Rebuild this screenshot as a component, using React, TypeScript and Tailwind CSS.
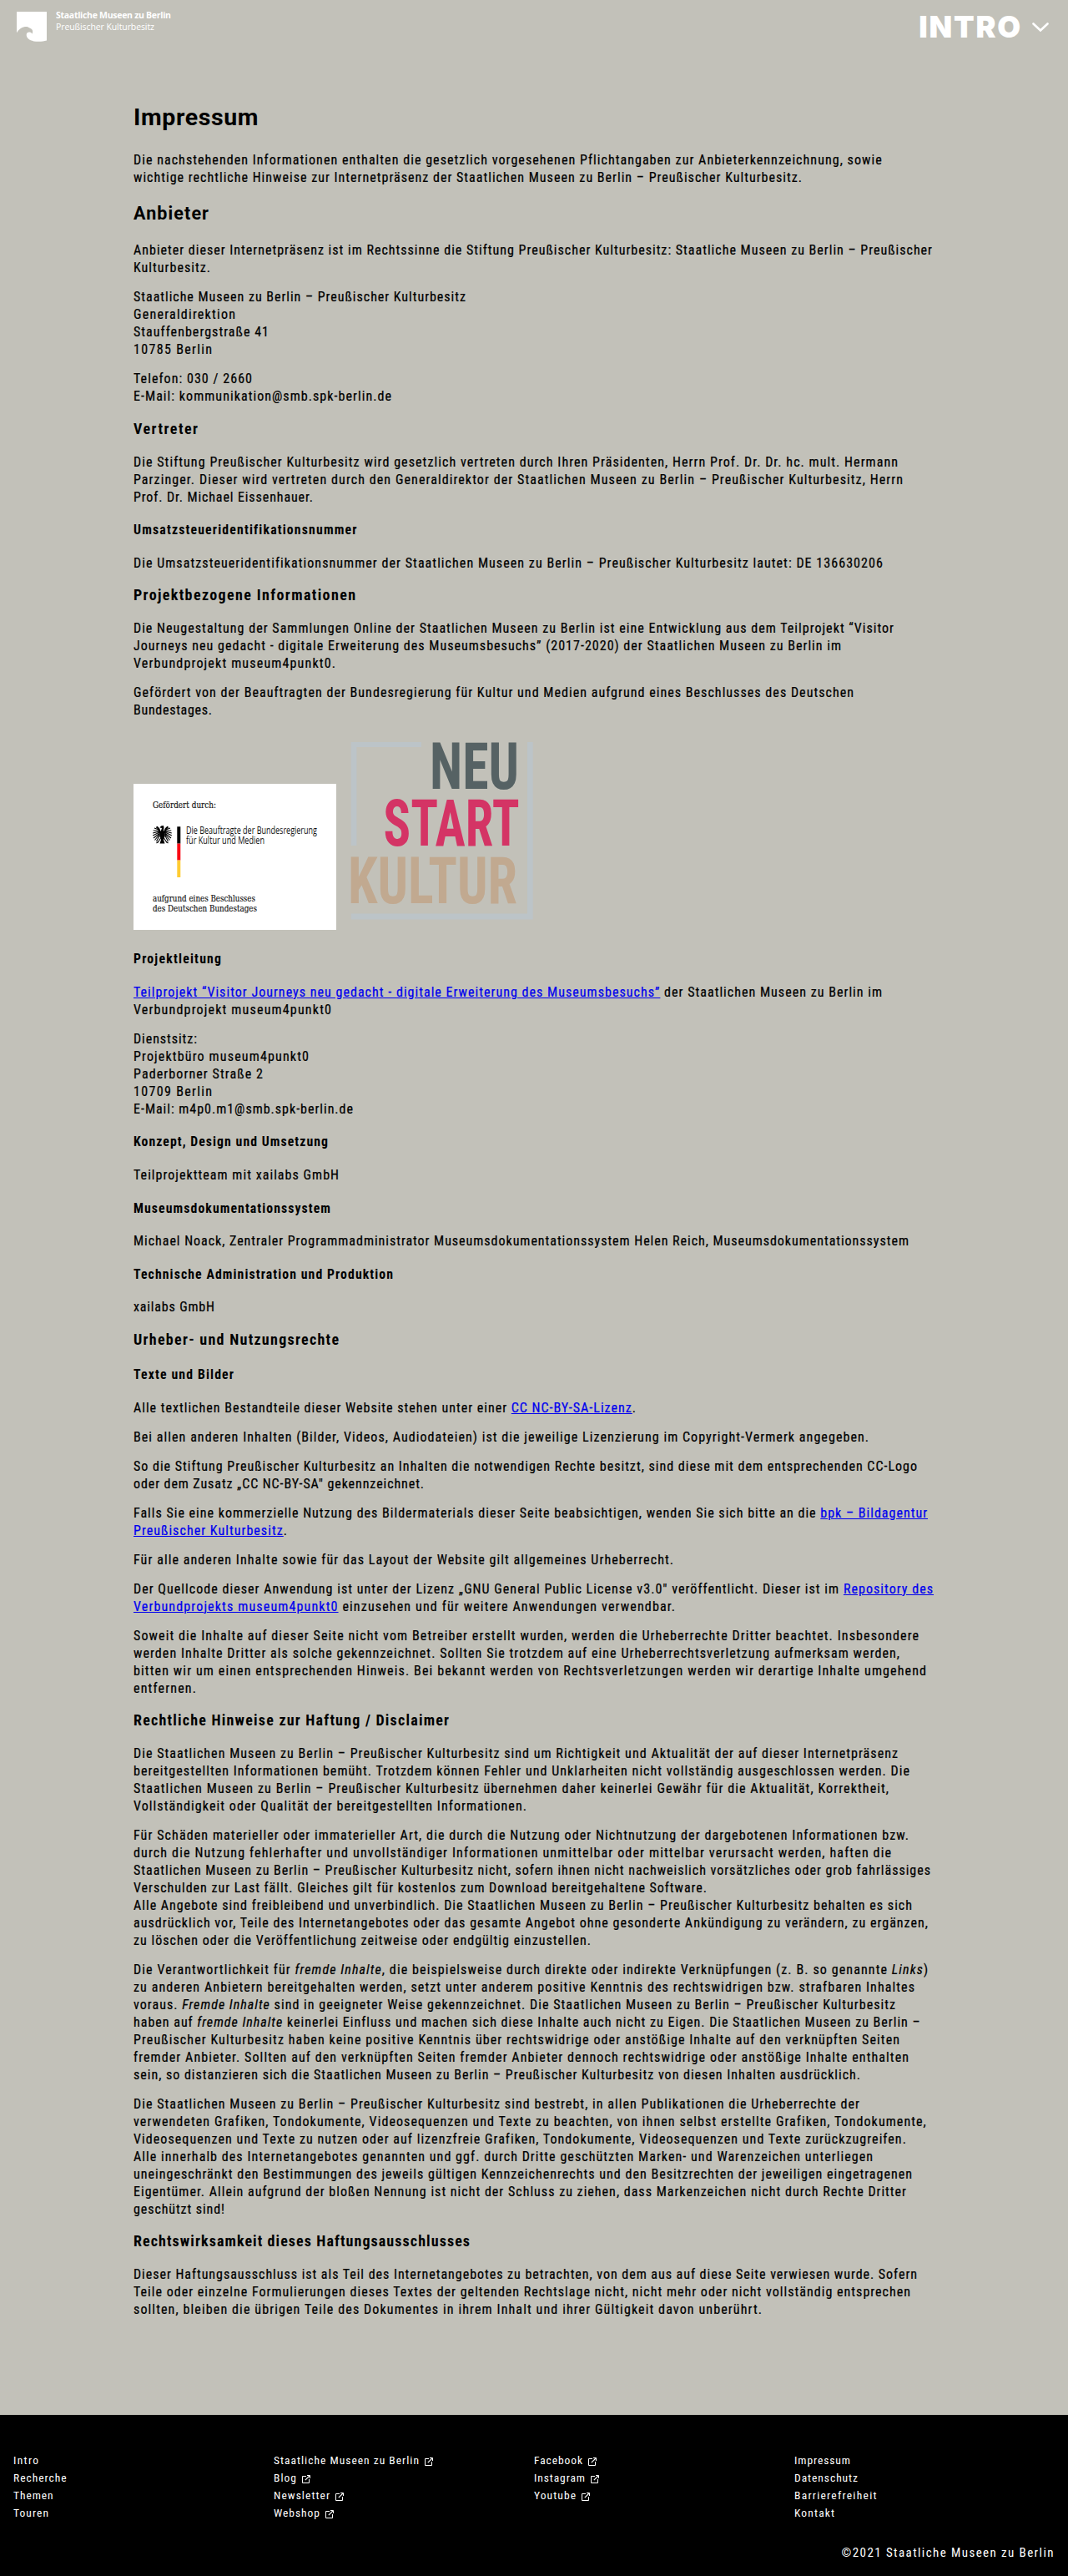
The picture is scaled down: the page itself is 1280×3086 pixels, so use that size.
import { useLayoutEffect, useRef, useState, type ReactNode } from "react";

/* One line of text, tracked so that it spans the given width. */
function Line({ w, children, className = "" }: { w: number; children: ReactNode; className?: string }) {
  const ref = useRef<HTMLSpanElement>(null);
  const [tracking, setTracking] = useState<number | null>(null);
  useLayoutEffect(() => {
    const el = ref.current;
    if (!el || tracking !== null) return;
    const gaps = Math.max(1, (el.textContent ?? "").length - 1);
    setTracking((w - el.getBoundingClientRect().width) / gaps);
  }, [tracking, w]);
  return (
    <span
      ref={ref}
      className={`block w-max whitespace-nowrap ${className}`}
      style={{ letterSpacing: tracking === null ? undefined : `${tracking}px` }}
    >
      {children}
    </span>
  );
}

type Row = [ReactNode, number];

function P({ rows }: { rows: Row[] }) {
  return (
    <p className="my-[14px] text-[16px] [-webkit-text-stroke:0.22px]">
      {rows.map(([t, w], i) => (
        <Line key={i} w={w}>{t}</Line>
      ))}
    </p>
  );
}

function H3({ w, children }: { w: number; children: ReactNode }) {
  return (
    <h3 className="my-[16.38px] text-[18px] leading-[24.57px] font-bold">
      <Line w={w}>{children}</Line>
    </h3>
  );
}

function H4({ w, children }: { w: number; children: ReactNode }) {
  return (
    <h4 className="my-[18.62px] font-bold">
      <Line w={w}>{children}</Line>
    </h4>
  );
}

function A({ children }: { children: ReactNode }) {
  return <a href="#" className="text-[#0000ee] underline">{children}</a>;
}

function Logo() {
  return (
    <svg width="36" height="36" viewBox="0 0 36 36" className="shrink-0">
      <path
        fill="#fff"
        d="M0 0H36V34.6C31.500 36 25 36.200 20.500 35.400C15 34.400 11.600 31.300 11.700 27.700C11.800 24.700 14 24.200 16 24.600C17.600 25 18.300 25.900 18.500 26.700C19.600 24.600 19.500 22 17.400 20.500L15 19.300C13.500 18 11.200 17.600 9 18.200C5.500 18.600 2.500 21.300 0 25.300Z"
      />
    </svg>
  );
}

function External() {
  return (
    <svg width="10" height="10" viewBox="0 0 10 10" fill="none" stroke="#fff" className="mt-[2px] ml-[6px]">
      <path d="M5 1.500H.5V9.500H8.500V5" />
      <path d="M3.800 6.200L9 1" strokeWidth="1.200" />
      <path d="M6 .5H9.500V4" />
    </svg>
  );
}

function FundingLogo() {
  return (
    <svg width="243" height="175" viewBox="0 0 243 175" className="shrink-0 bg-white">
      <g className="font-[DejaVu_Serif,Liberation_Serif,serif] [font-stretch:condensed]" fontSize="10.300" fill="#111" stroke="#111" strokeWidth=".15">
        <text x="23" y="29" textLength="76" lengthAdjust="spacingAndGlyphs">Gefördert durch:</text>
        <text x="23" y="141" textLength="123" lengthAdjust="spacingAndGlyphs">aufgrund eines Beschlusses</text>
        <text x="23" y="153" textLength="125" lengthAdjust="spacingAndGlyphs">des Deutschen Bundestages</text>
      </g>
      <g className="font-['Open_Sans',sans-serif] [font-stretch:normal]" fontSize="12" fill="#111">
        <text x="63" y="60" textLength="157" lengthAdjust="spacingAndGlyphs">Die Beauftragte der Bundesregierung</text>
        <text x="63" y="72" textLength="94" lengthAdjust="spacingAndGlyphs">für Kultur und Medien</text>
      </g>
      <rect x="52.300" y="51.300" width="4" height="20.300" fill="#000" />
      <rect x="52.300" y="71.600" width="4" height="20" fill="#fa0a14" />
      <rect x="52.300" y="91.600" width="4" height="20.400" fill="#ffcc33" />
      <g transform="translate(34.500 61)" stroke="#000" fill="none">
        <path fill="#000" stroke="none" d="M-1.500 -10.500L1.500 -11L2 -8.500L1.500 -5C3 -4 3.500 -1 3 2L1.500 6L3 10.500H-3L-1.500 6L-3 2C-3.500 -1 -3 -4 -1.500 -5L-.5 -8L-3 -8.500Z" />
        {[-1, 1].map((s) => (
          <g key={s} transform={`scale(${s} 1)`}>
            <path strokeWidth="2" d="M2.500 -2C3.500 -6 4 -8 7 -9.500" />
            <path strokeWidth="1.100" d="M4 -6L9.500 -8M3.500 -5L10.800 -5M3.500 -4L11.300 -2M3.500 -3L11.300 1M3 -2L10.500 4M3 -1L9 6.500M3 .5L7 8M2 4L5.500 9.500M5 8.500L7 10" />
          </g>
        ))}
      </g>
    </svg>
  );
}

function NeustartLogo() {
  return (
    <svg width="239" height="239" viewBox="0 0 239 239" className="ml-[4px] shrink-0 overflow-visible">
      <g fill="#bcc4c8">
        <path d="M13.700 14H98V20H20.400V138H13.700Z" />
        <path d="M225 14H231.700V226.500H13.700V219.500H225Z" />
      </g>
      <g className="font-[Roboto] [font-stretch:condensed]" fontSize="78.500" fontWeight="700">
        <text x="108" y="70" textLength="107" lengthAdjust="spacingAndGlyphs" fill="#566264">NEU</text>
        <text x="52.500" y="138.300" textLength="163" lengthAdjust="spacingAndGlyphs" fill="#d43465">START</text>
        <text x="10" y="207" textLength="203" lengthAdjust="spacingAndGlyphs" fill="#c1a990">KULTUR</text>
      </g>
    </svg>
  );
}

const footer: { t: string; w: number; ext?: boolean }[][] = [
  [{ t: "Intro", w: 30 }, { t: "Recherche", w: 63.5 }, { t: "Themen", w: 47.5 }, { t: "Touren", w: 42 }],
  [
    { t: "Staatliche Museen zu Berlin", w: 174, ext: true },
    { t: "Blog", w: 27, ext: true },
    { t: "Newsletter", w: 67, ext: true },
    { t: "Webshop", w: 55, ext: true },
  ],
  [
    { t: "Facebook", w: 58, ext: true },
    { t: "Instagram", w: 61, ext: true },
    { t: "Youtube", w: 50, ext: true },
  ],
  [{ t: "Impressum", w: 67 }, { t: "Datenschutz", w: 76 }, { t: "Barrierefreiheit", w: 98.5 }, { t: "Kontakt", w: 48 }],
];

export default function App() {
  return (
    <div className="flex min-h-[3086px] flex-col bg-[#c2c1b9] font-[Roboto,sans-serif] text-[15.75px] leading-[21px] text-black [font-stretch:condensed]">
      <header className="flex h-[60px] items-start justify-between pt-[14px] pr-[23px] pl-5 text-white">
        <div className="flex gap-[11px]">
          <Logo />
          <div className="-mt-[3.500px] font-['Open_Sans',sans-serif] text-[10.5px] leading-[14px] [font-stretch:normal]">
            <Line w={138} className="font-bold">Staatliche Museen zu Berlin</Line>
            <Line w={118}>Preußischer Kulturbesitz</Line>
          </div>
        </div>
        <div className="flex items-center gap-[12px]">
          <div className="font-[Inter,sans-serif] text-[36px] leading-9 font-black [font-stretch:normal]">
            <Line w={122}>INTRO</Line>
          </div>
          <svg width="20" height="12" viewBox="0 0 20 12" fill="none" stroke="#fff" strokeWidth="2.600" className="mt-[2px]">
            <path d="M1.500 1.500L10 9.500L18.500 1.500" strokeLinecap="round" />
          </svg>
        </div>
      </header>

      <main className="ml-40 flow-root w-[960px] pt-[60.2px]">
        <h1 className="mb-[18.76px] text-[28.5px] leading-[42px] font-bold [font-stretch:normal]"><Line w={149.5}>Impressum</Line></h1>
        <P rows={[
          ["Die nachstehenden Informationen enthalten die gesetzlich vorgesehenen Pflichtangaben zur Anbieterkennzeichnung, sowie", 896],
          ["wichtige rechtliche Hinweise zur Internetpräsenz der Staatlichen Museen zu Berlin – Preußischer Kulturbesitz.", 801],
        ]} />
        <h2 className="my-[17.43px] text-[21.5px] leading-[31.5px] font-bold [font-stretch:normal]"><Line w={90}>Anbieter</Line></h2>
        <P rows={[
          ["Anbieter dieser Internetpräsenz ist im Rechtssinne die Stiftung Preußischer Kulturbesitz: Staatliche Museen zu Berlin – Preußischer", 957],
          ["Kulturbesitz.", 92],
        ]} />
        <P rows={[
          ["Staatliche Museen zu Berlin – Preußischer Kulturbesitz", 398],
          ["Generaldirektion", 122],
          ["Stauffenbergstraße 41", 162],
          ["10785 Berlin", 94],
        ]} />
        <P rows={[["Telefon: 030 / 2660", 142], ["E-Mail: kommunikation@smb.spk-berlin.de", 309]]} />
        <H3 w={77}>Vertreter</H3>
        <P rows={[
          ["Die Stiftung Preußischer Kulturbesitz wird gesetzlich vertreten durch Ihren Präsidenten, Herrn Prof. Dr. Dr. hc. mult. Hermann", 916],
          ["Parzinger. Dieser wird vertreten durch den Generaldirektor der Staatlichen Museen zu Berlin – Preußischer Kulturbesitz, Herrn", 922],
          ["Prof. Dr. Michael Eissenhauer.", 215],
        ]} />
        <H4 w={267}>Umsatzsteueridentifikationsnummer</H4>
        <P rows={[["Die Umsatzsteueridentifikationsnummer der Staatlichen Museen zu Berlin – Preußischer Kulturbesitz lautet: DE 136630206", 897]]} />
        <H3 w={266}>Projektbezogene Informationen</H3>
        <P rows={[
          ["Die Neugestaltung der Sammlungen Online der Staatlichen Museen zu Berlin ist eine Entwicklung aus dem Teilprojekt “Visitor", 911],
          ["Journeys neu gedacht - digitale Erweiterung des Museumsbesuchs” (2017-2020) der Staatlichen Museen zu Berlin im", 848],
          ["Verbundprojekt museum4punkt0.", 242],
        ]} />
        <P rows={[
          ["Gefördert von der Beauftragten der Bundesregierung für Kultur und Medien aufgrund eines Beschlusses des Deutschen", 863],
          ["Bundestages.", 94],
        ]} />
        <div className="flex h-[244.400px] items-end pb-[6px]">
          <FundingLogo />
          <NeustartLogo />
        </div>
        <H4 w={105}>Projektleitung</H4>
        <P rows={[
          [<><A>Teilprojekt “Visitor Journeys neu gedacht - digitale Erweiterung des Museumsbesuchs”</A> der Staatlichen Museen zu Berlin im</>, 897],
          ["Verbundprojekt museum4punkt0", 237],
        ]} />
        <P rows={[
          ["Dienstsitz:", 76],
          ["Projektbüro museum4punkt0", 210],
          ["Paderborner Straße 2", 155],
          ["10709 Berlin", 94],
          ["E-Mail: m4p0.m1@smb.spk-berlin.de", 263],
        ]} />
        <H4 w={233}>Konzept, Design und Umsetzung</H4>
        <P rows={[["Teilprojektteam mit xailabs GmbH", 246]]} />
        <H4 w={236}>Museumsdokumentationssystem</H4>
        <P rows={[["Michael Noack, Zentraler Programmadministrator Museumsdokumentationssystem Helen Reich, Museumsdokumentationssystem", 929]]} />
        <H4 w={311}>Technische Administration und Produktion</H4>
        <P rows={[["xailabs GmbH", 97]]} />
        <H3 w={246}>Urheber- und Nutzungsrechte</H3>
        <H4 w={120}>Texte und Bilder</H4>
        <P rows={[[<>Alle textlichen Bestandteile dieser Website stehen unter einer <A>CC NC-BY-SA-Lizenz</A>.</>, 602]]} />
        <P rows={[["Bei allen anderen Inhalten (Bilder, Videos, Audiodateien) ist die jeweilige Lizenzierung im Copyright-Vermerk angegeben.", 881]]} />
        <P rows={[
          ["So die Stiftung Preußischer Kulturbesitz an Inhalten die notwendigen Rechte besitzt, sind diese mit dem entsprechenden CC-Logo", 939],
          ["oder dem Zusatz „CC NC-BY-SA\" gekennzeichnet.", 348],
        ]} />
        <P rows={[
          [<>Falls Sie eine kommerzielle Nutzung des Bildermaterials dieser Seite beabsichtigen, wenden Sie sich bitte an die <A>bpk – Bildagentur</A></>, 951],
          [<><A>Preußischer Kulturbesitz</A>.</>, 184],
        ]} />
        <P rows={[["Für alle anderen Inhalte sowie für das Layout der Website gilt allgemeines Urheberrecht.", 647]]} />
        <P rows={[
          [<>Der Quellcode dieser Anwendung ist unter der Lizenz „GNU General Public License v3.0" veröffentlicht. Dieser ist im <A>Repository des</A></>, 958],
          [<><A>Verbundprojekts museum4punkt0</A> einzusehen und für weitere Anwendungen verwendbar.</>, 649],
        ]} />
        <P rows={[
          ["Soweit die Inhalte auf dieser Seite nicht vom Betreiber erstellt wurden, werden die Urheberrechte Dritter beachtet. Insbesondere", 941],
          ["werden Inhalte Dritter als solche gekennzeichnet. Sollten Sie trotzdem auf eine Urheberrechtsverletzung aufmerksam werden,", 918],
          ["bitten wir um einen entsprechenden Hinweis. Bei bekannt werden von Rechtsverletzungen werden wir derartige Inhalte umgehend", 950],
          ["entfernen.", 75],
        ]} />
        <H3 w={378}>Rechtliche Hinweise zur Haftung / Disclaimer</H3>
        <P rows={[
          ["Die Staatlichen Museen zu Berlin – Preußischer Kulturbesitz sind um Richtigkeit und Aktualität der auf dieser Internetpräsenz", 916],
          ["bereitgestellten Informationen bemüht. Trotzdem können Fehler und Unklarheiten nicht vollständig ausgeschlossen werden. Die", 930],
          ["Staatlichen Museen zu Berlin – Preußischer Kulturbesitz übernehmen daher keinerlei Gewähr für die Aktualität, Korrektheit,", 905],
          ["Vollständigkeit oder Qualität der bereitgestellten Informationen.", 471],
        ]} />
        <P rows={[
          ["Für Schäden materieller oder immaterieller Art, die durch die Nutzung oder Nichtnutzung der dargebotenen Informationen bzw.", 929],
          ["durch die Nutzung fehlerhafter und unvollständiger Informationen unmittelbar oder mittelbar verursacht werden, haften die", 908],
          ["Staatlichen Museen zu Berlin – Preußischer Kulturbesitz nicht, sofern ihnen nicht nachweislich vorsätzliches oder grob fahrlässiges", 955],
          ["Verschulden zur Last fällt. Gleiches gilt für kostenlos zum Download bereitgehaltene Software.", 687],
          ["Alle Angebote sind freibleibend und unverbindlich. Die Staatlichen Museen zu Berlin – Preußischer Kulturbesitz behalten es sich", 933],
          ["ausdrücklich vor, Teile des Internetangebotes oder das gesamte Angebot ohne gesonderte Ankündigung zu verändern, zu ergänzen,", 952],
          ["zu löschen oder die Veröffentlichung zeitweise oder endgültig einzustellen.", 548],
        ]} />
        <P rows={[
          [<>Die Verantwortlichkeit für <em>fremde Inhalte</em>, die beispielsweise durch direkte oder indirekte Verknüpfungen (z. B. so genannte <em>Links</em>)</>, 952],
          ["zu anderen Anbietern bereitgehalten werden, setzt unter anderem positive Kenntnis des rechtswidrigen bzw. strafbaren Inhaltes", 936],
          [<>voraus. <em>Fremde Inhalte</em> sind in geeigneter Weise gekennzeichnet. Die Staatlichen Museen zu Berlin – Preußischer Kulturbesitz</>, 913],
          [<>haben auf <em>fremde Inhalte</em> keinerlei Einfluss und machen sich diese Inhalte auch nicht zu Eigen. Die Staatlichen Museen zu Berlin –</>, 942],
          ["Preußischer Kulturbesitz haben keine positive Kenntnis über rechtswidrige oder anstößige Inhalte auf den verknüpften Seiten", 918],
          ["fremder Anbieter. Sollten auf den verknüpften Seiten fremder Anbieter dennoch rechtswidrige oder anstößige Inhalte enthalten", 929],
          ["sein, so distanzieren sich die Staatlichen Museen zu Berlin – Preußischer Kulturbesitz von diesen Inhalten ausdrücklich.", 871],
        ]} />
        <P rows={[
          ["Die Staatlichen Museen zu Berlin – Preußischer Kulturbesitz sind bestrebt, in allen Publikationen die Urheberrechte der", 870],
          ["verwendeten Grafiken, Tondokumente, Videosequenzen und Texte zu beachten, von ihnen selbst erstellte Grafiken, Tondokumente,", 948],
          ["Videosequenzen und Texte zu nutzen oder auf lizenzfreie Grafiken, Tondokumente, Videosequenzen und Texte zurückzugreifen.", 925],
          ["Alle innerhalb des Internetangebotes genannten und ggf. durch Dritte geschützten Marken- und Warenzeichen unterliegen", 886],
          ["uneingeschränkt den Bestimmungen des jeweils gültigen Kennzeichenrechts und den Besitzrechten der jeweiligen eingetragenen", 933],
          ["Eigentümer. Allein aufgrund der bloßen Nennung ist nicht der Schluss zu ziehen, dass Markenzeichen nicht durch Rechte Dritter", 926],
          ["geschützt sind!", 109],
        ]} />
        <H3 w={403}>Rechtswirksamkeit dieses Haftungsausschlusses</H3>
        <P rows={[
          ["Dieser Haftungsausschluss ist als Teil des Internetangebotes zu betrachten, von dem aus auf diese Seite verwiesen wurde. Sofern", 939],
          ["Teile oder einzelne Formulierungen dieses Textes der geltenden Rechtslage nicht, nicht mehr oder nicht vollständig entsprechen", 931],
          ["sollten, bleiben die übrigen Teile des Dokumentes in ihrem Inhalt und ihrer Gültigkeit davon unberührt.", 753],
        ]} />
      </main>

      <footer className="mt-auto h-[193px] bg-black px-4 pt-[44px] text-[13.5px] text-white">
        <div className="grid grid-cols-4">
          {footer.map((col, i) => (
            <ul key={i}>
              {col.map(({ t, w, ext }) => (
                <li key={t} className="flex h-[21px] items-center">
                  <Line w={w}>{t}</Line>
                  {ext && <External />}
                </li>
              ))}
            </ul>
          ))}
        </div>
        <div className="mt-[27px] flex justify-end text-[15px]">
          <Line w={254}>©2021 Staatliche Museen zu Berlin</Line>
        </div>
      </footer>
    </div>
  );
}
